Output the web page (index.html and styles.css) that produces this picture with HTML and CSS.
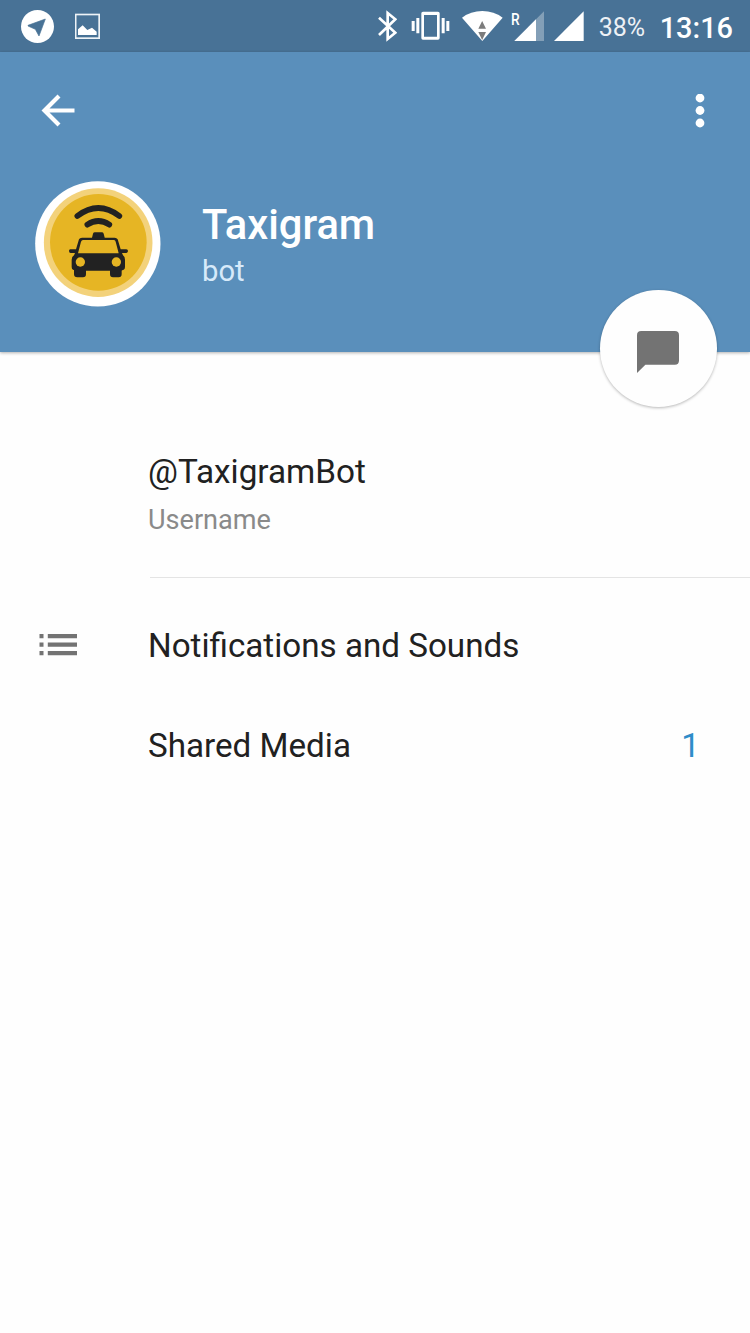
FILE: index.html
```html
<!DOCTYPE html>
<html lang="en">
<head>
  <meta charset="UTF-8" />
  <meta name="viewport" content="width=device-width, initial-scale=1.0" />
  <title>Taxigram</title>
  <link rel="stylesheet" href="styles.css">
</head>
<body>
  <div class="status-bar">
    <svg class="telegram" width="33" height="52" viewBox="63 0 99 156">
      <circle cx="112.5" cy="79.5" r="49.5" fill="#fff" />
      <path d="M84 76L136 57L117 108L106 88L84 78Z" fill="#487296" stroke="#487296" stroke-width="2" stroke-linejoin="round" />
    </svg>
    <svg class="picture" width="25" height="52" viewBox="225 0 75 156">
      <rect x="227" y="43.500" width="70.500" height="71" fill="none" stroke="#eef3f7" stroke-width="5" />
      <path d="M234 105V88L248 76L262 90L276 83L290 95V105Z" fill="#fff" />
    </svg>

    <div class="status-right">
      <svg class="bluetooth" width="19" height="52" viewBox="38 0 57 156">
        <path d="M41 53L90 98L67 117V39L90 58L41 105" fill="none" stroke="#fff" stroke-width="8" />
      </svg>
      <svg class="vibrate" width="39" height="52" viewBox="138 0 117 156">
        <path d="M174 35H219Q224 35 224 40V114Q224 119 219 119H174Q169 119 169 114V40Q169 35 174 35ZM177 45V110H216V45Z" fill="#fff" fill-rule="evenodd" />
        <path d="M140 63h9v30h-9zM154 54h9v46h-9zM230 54h9v46h-9zM244 63h9v30h-9z" fill="#fff" />
      </svg>
      <svg class="wifi" width="41" height="52" viewBox="290 0 123 156">
        <path d="M290 53Q316 33 351 33T412 53L351 123Z" fill="#fff" />
        <path d="M350.500 63L362 86H339ZM339 96H362L350.500 120Z" fill="#7c7c7c" />
      </svg>
      <svg class="signal-roaming" width="33" height="52" viewBox="438 0 99 156">
        <path d="M537 34V123H448Z" fill="#839fb7" />
        <path d="M513 58V123H448Z" fill="#fff" />
        <text class="roaming" x="438" y="74" textLength="26" lengthAdjust="spacingAndGlyphs">R</text>
      </svg>
      <svg class="signal" width="30" height="52" viewBox="566 0 90 156">
        <path d="M655 34V123H566Z" fill="#fff" />
      </svg>
      <span class="battery">38%</span>
      <span class="clock">13:16</span>
    </div>
  </div>

  <header class="header">
    <div class="toolbar">
      <svg width="34" height="34" viewBox="0 0 34 34">
        <path d="M18 2L3.500 16.500L18 31M4 16.500H33.500" fill="none" stroke="#fff" stroke-width="4.200" />
      </svg>
      <svg width="10" height="34" viewBox="0 0 10 34">
        <circle cx="5" cy="4" r="4.400" fill="#fff" />
        <circle cx="5" cy="16.500" r="4.400" fill="#fff" />
        <circle cx="5" cy="29" r="4.400" fill="#fff" />
      </svg>
    </div>

    <div class="profile">
      <svg class="avatar" width="126" height="126" viewBox="30 32 378 378">
        <circle cx="218.500" cy="220.500" r="188" fill="#fff" />
        <circle cx="219.500" cy="217" r="163" fill="#f3d27b" />
        <circle cx="220" cy="216" r="145" fill="#e6b524" />
        <!-- signal arcs -->
        <path d="M157 137Q220 89 283 137M187 163Q220 141 253 163" fill="none" stroke="#222" stroke-width="17" stroke-linecap="round" />
        <!-- taxi -->
        <path d="M200 206L204 190Q205 186 210 186H230Q235 186 236 190L240 206Z" fill="#222" />
        <path d="M162 207Q164 202 171 202H269Q275 202 278 207L287 237H304Q309 237 309 242T304 248H291L294 255Q300 259 300 268V290Q300 296 296 298L288 301H152L144 298Q140 296 140 290V268Q140 259 147 255L150 248H137Q132 248 132 242T137 237H153ZM174 209Q170 209 168 214L159 249H281L272 214Q271 209 267 209Z" fill="#222" fill-rule="evenodd" />
        <path d="M147 290H183V311Q183 321 174 321H157Q147 321 147 311ZM255 290H290V311Q290 321 281 321H264Q255 321 255 311Z" fill="#222" />
        <circle cx="166" cy="275" r="14" fill="#e6b524" />
        <circle cx="274" cy="275" r="14" fill="#e6b524" />
      </svg>
      <div class="names">
        <h1>Taxigram</h1>
        <p>bot</p>
      </div>
    </div>

    <button class="message-btn" aria-label="Message">
      <svg width="42" height="42" viewBox="0 0 42 42">
        <path d="M4.200 0H37.800Q42 0 42 4.200V29.500Q42 33.700 37.800 33.700H8.400L0 42V4.200Q0 0 4.200 0Z" fill="#737373" />
      </svg>
    </button>
  </header>

  <main class="info">
    <div class="username">
      <p class="value">@TaxigramBot</p>
      <p class="label">Username</p>
    </div>
    <div class="row">
      <svg class="row-icon" width="39" height="22" viewBox="0 0 39 22">
        <path d="M.500 0h4v4.200h-4zM8.800 0h29.200v4.200H8.800zM.500 8.500h4v4.200h-4zM8.800 8.500h29.200v4.200H8.800zM.500 17h4v4.200h-4zM8.800 17h29.200v4.200H8.800z" fill="#737373" />
      </svg>
      <span class="row-text">Notifications and Sounds</span>
    </div>
    <div class="row">
      <span class="row-text">Shared Media</span>
      <span class="count">1</span>
    </div>
  </main>
</body>
</html>
```

FILE: styles.css
```css
body {
  font-family: Roboto, "Liberation Sans", sans-serif;
  background-color: #fefefe;
  margin: 0;
  color: #212121;
}
h1, p {
  margin: 0;
}
svg {
  display: block;
  flex-shrink: 0;
}
.status-bar {
  display: flex;
  height: 52px;
  padding: 0 17px 0 21px;
  background-color: #487296;
  color: #fff;
}
.picture {
  margin-left: 21px;
}
.status-right {
  display: flex;
  margin-left: auto;
}
.vibrate {
  margin-left: 14px;
}
.wifi {
  margin-left: 12px;
}
.signal-roaming {
  margin-left: 8px;
}
.signal {
  margin-left: 10px;
}
.roaming {
  font-size: 51px;
  font-weight: 500;
  fill: #fff;
}
.battery {
  margin-left: 15px;
  width: 61px;
  font-size: 25px;
  line-height: 56px;
  color: #edf1f5;
}
.clock {
  font-size: 28.9px;
  font-weight: 500;
  line-height: 56px;
}
.header {
  position: relative;
  height: 300px;
  background-color: #5a8fbb;
  box-shadow: 0 1px 3px rgba(0, 0, 0, 0.3);
}
.toolbar {
  display: flex;
  justify-content: space-between;
  padding: 42px 45px 0 41px;
}
.profile {
  display: flex;
  padding: 53px 0 0 35px;
}
.names {
  margin-left: 41px;
  padding-top: 19px;
}
h1 {
  font-size: 41.7px;
  font-weight: 500;
  line-height: 50px;
  color: #fff;
}
.names p {
  font-size: 29.2px;
  line-height: 43px;
  color: #d7eafa;
}
/* sits on the lower edge of the header */
.message-btn {
  position: absolute;
  right: 33px;
  bottom: -55px;
  width: 117px;
  height: 117px;
  padding: 6px 1px 0 0;
  border: none;
  border-radius: 50%;
  background-color: #fefefe;
  box-shadow: 0 1px 3px rgba(0, 0, 0, 0.28);
  display: flex;
  align-items: center;
  justify-content: center;
}
.info {
  padding-top: 95px;
}
.username {
  margin-left: 150px;
  height: 130px;
  border-bottom: 1px solid #e4e4e4;
}
.username p {
  margin-left: -2px;
}
.value {
  font-size: 33.3px;
  line-height: 50px;
}
.label {
  font-size: 27.1px;
  line-height: 46px;
  color: #8a8a8a;
}
.row {
  display: flex;
  align-items: center;
  height: 100px;
  padding: 0 50px 0 39px;
  font-size: 33.2px;
}
.username + .row {
  padding-top: 17px;
}
.row-icon {
  margin-right: 70px;
}
.row-text {
  flex: 1;
}
.row-text:first-child {
  margin-left: 109px;
}
.count {
  color: #2f8cc9;
}
```
